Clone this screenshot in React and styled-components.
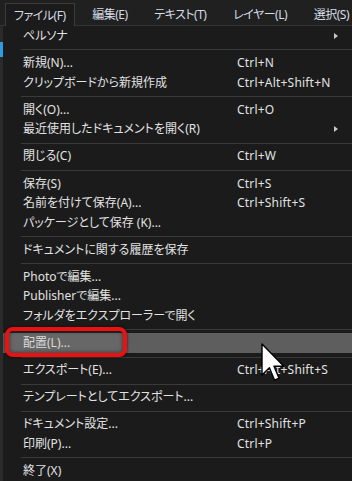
import React from "react";
import styled, { createGlobalStyle } from "styled-components";

const menuTabs = ["ファイル(F)", "編集(E)", "テキスト(T)", "レイヤー(L)", "選択(S)"];

// sep: 区切り線 / sub: サブメニューあり
const items = [
  { label: "ペルソナ", sub: true },
  { sep: true },
  { label: "新規(N)...", key: "Ctrl+N" },
  { label: "クリップボードから新規作成", key: "Ctrl+Alt+Shift+N" },
  { sep: true },
  { label: "開く(O)...", key: "Ctrl+O" },
  { label: "最近使用したドキュメントを開く(R)", sub: true },
  { sep: true },
  { label: "閉じる(C)", key: "Ctrl+W" },
  { sep: true },
  { label: "保存(S)", key: "Ctrl+S" },
  { label: "名前を付けて保存(A)...", key: "Ctrl+Shift+S" },
  { label: "パッケージとして保存 (K)..." },
  { sep: true },
  { label: "ドキュメントに関する履歴を保存" },
  { sep: true },
  { label: "Photoで編集..." },
  { label: "Publisherで編集..." },
  { label: "フォルダをエクスプローラーで開く" },
  { sep: true },
  { label: "配置(L)...", active: true },
  { sep: true },
  { label: "エクスポート(E)...", key: "Ctrl+Alt+Shift+S" },
  { sep: true },
  { label: "テンプレートとしてエクスポート..." },
  { sep: true },
  { label: "ドキュメント設定...", key: "Ctrl+Shift+P" },
  { label: "印刷(P)...", key: "Ctrl+P" },
  { sep: true },
  { label: "終了(X)" },
];

function Cursor() {
  return (
    <CursorSvg width="26" height="40" viewBox="0 0 13 20">
      <path
        d="M0.5 0.5 L0.5 16 L4.2 12.4 L6.8 18.6 L9 17.6 L6.5 11.6 L11.4 11.6 Z"
        fill="#fff"
        stroke="#000"
        strokeWidth="0.7"
        strokeLinejoin="round"
      />
    </CursorSvg>
  );
}

export default function App() {
  return (
    <>
      <GlobalStyle />
      <Screen>
        <MenuBar>
          {menuTabs.map((t, i) => (
            <Tab key={t} $active={i === 0}>
              {t}
            </Tab>
          ))}
        </MenuBar>
        <Body>
          <LeftStrip>
            <BlueBit />
          </LeftStrip>
          <Panel>
            {items.map((it, i) =>
              it.sep ? (
                <Separator key={i} />
              ) : (
                <Item key={i} $active={it.active}>
                  <Label>{it.label}</Label>
                  <Shortcut>{it.key}</Shortcut>
                  {it.sub ? <SubArrow /> : <span />}
                  {it.active && (
                    <>
                      <RedMark />
                      <Cursor />
                    </>
                  )}
                </Item>
              )
            )}
          </Panel>
        </Body>
      </Screen>
    </>
  );
}

const GlobalStyle = createGlobalStyle`
  body {
    margin: 0;
    background: #1b1b1b;
    overflow: hidden;
  }
`;

const Screen = styled.div`
  width: 352px;
  height: 481px;
  display: flex;
  flex-direction: column;
  overflow: hidden;
  background: #1b1b1b;
  font-family: "Noto Sans", "Noto Sans CJK JP", sans-serif;
  font-feature-settings: "palt";
  font-size: 12px;
  color: #e2e2e2;
`;

const MenuBar = styled.div`
  height: 26px;
  display: flex;
  align-items: stretch;
  gap: 8.7px;
  padding: 3px 0 0 5px;
  box-sizing: border-box;
  background: #202020;
  border-bottom: 1px solid #333;
  white-space: nowrap;
`;

const Tab = styled.div`
  display: flex;
  align-items: center;
  padding: 0 8px 1px 8px;
  letter-spacing: -0.5px;
  color: #d6dbe4;
  background: ${(p) => (p.$active ? "#1b1b1b" : "transparent")};
  border: 1px solid ${(p) => (p.$active ? "#3c3c3c" : "transparent")};
  border-bottom: none;
  margin-bottom: ${(p) => (p.$active ? "-1px" : "0")};
`;

const Body = styled.div`
  flex: 1;
  display: flex;
`;

const LeftStrip = styled.div`
  width: 3px;
  background: #2a2a2a;
  display: flex;
  flex-direction: column;
`;

const BlueBit = styled.div`
  margin-top: 16px;
  height: 15px;
  background: #2f9be0;
`;

const Panel = styled.div`
  flex: 1;
  display: flex;
  flex-direction: column;
  background: #1b1b1b;
`;

const Item = styled.div`
  position: relative;
  height: 19.6px;
  flex: none;
  display: grid;
  grid-template-columns: 214px 1fr 18px;
  align-items: center;
  padding-left: 20px;
  white-space: nowrap;
  background: ${(p) => (p.$active ? "#5e5e5e" : "transparent")};
  color: ${(p) => (p.$active ? "#d8d8d8" : "#e2e2e2")};
`;

const Label = styled.span`
  line-height: 19.6px;
`;

const Shortcut = styled.span`
  line-height: 19.6px;
  letter-spacing: 0.2px;
`;

const SubArrow = styled.span`
  width: 0;
  height: 0;
  border-left: 4px solid #c8c8c8;
  border-top: 3.5px solid transparent;
  border-bottom: 3.5px solid transparent;
`;

const Separator = styled.div`
  flex: none;
  height: 1px;
  margin: 3.8px 0 2.7px 18px;
  background: #3a3a3a;
`;

const RedMark = styled.div`
  position: absolute;
  left: 2px;
  top: -6px;
  width: 122px;
  height: 30px;
  box-sizing: border-box;
  border: 4px solid #ec1010;
  border-radius: 8px;
  background: rgba(255, 255, 255, 0.06);
  box-shadow: 0 0 3px rgba(0, 0, 0, 0.8), inset 0 0 4px rgba(0, 0, 0, 0.55);
`;

const CursorSvg = styled.svg`
  position: absolute;
  left: 258px;
  top: 10px;
  z-index: 2;
`;
